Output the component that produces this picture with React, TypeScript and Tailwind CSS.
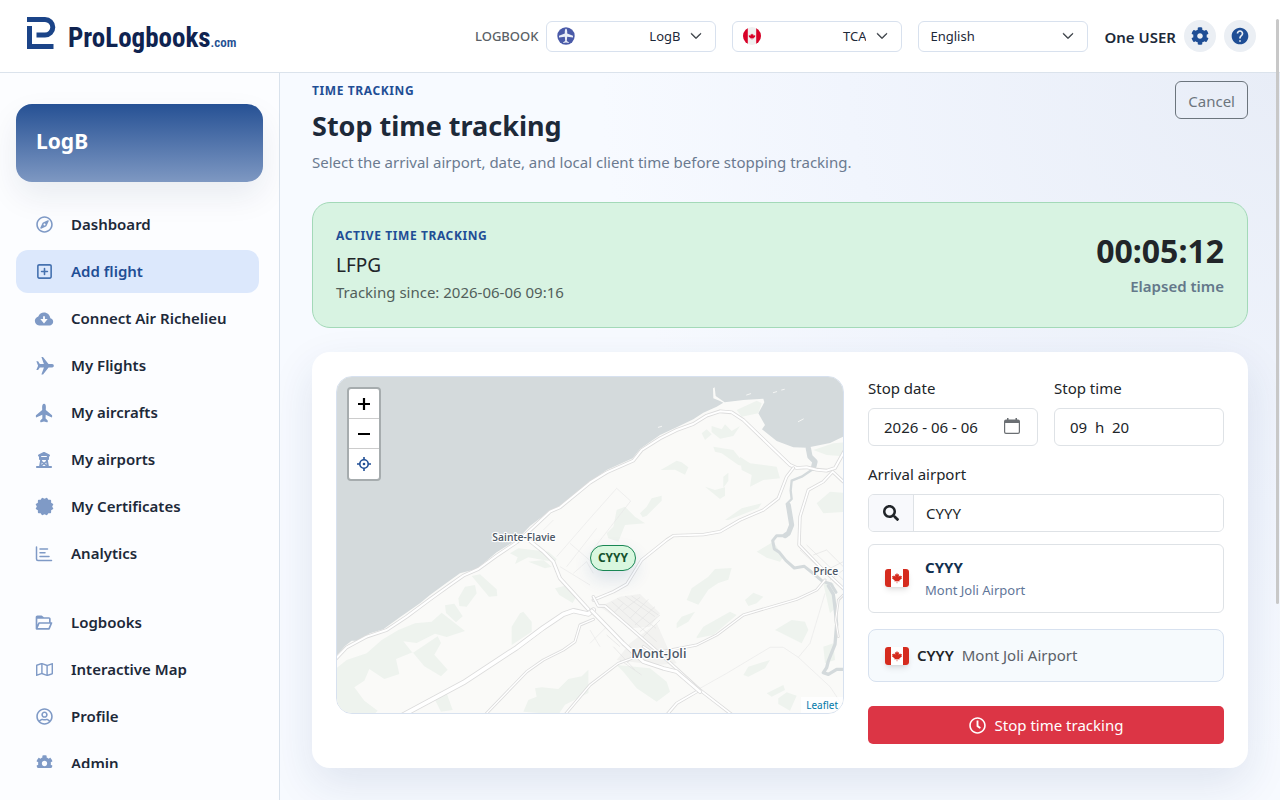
import React from 'react';
import { BiSolidCertification, BiSolidCloudDownload, BiFolderOpen, BiSolidPlaneAlt } from 'react-icons/bi';
import {
  FaCog,
  FaRegClock,
  FaRegCompass,
  FaRegMap,
  FaRegUserCircle,
  FaSearch,
} from 'react-icons/fa';
import { FaRegSquarePlus, FaTowerObservation } from 'react-icons/fa6';
import { IoAirplane } from 'react-icons/io5';
import { MdHelp } from 'react-icons/md';
import { BsChevronDown } from 'react-icons/bs';

function AnalyticsIcon({ className }: { className?: string }) {
  return (
    <svg viewBox="0 0 18 18" className={className} fill="none" stroke="currentColor" strokeWidth="1.5" strokeLinecap="round">
      <path d="M1.5 2v12q0 1.5 1.5 1.5h13.5M5 4h7.5M5 7.7h5M5 11.5h9" />
    </svg>
  );
}

const MAPLE =
  'M0-10 2-6 5-7.5 4-2 7.5-5 8.3-3 12-3.5 10.5 0 12 1.2 5.5 6 6 8 .7 7.3.7 12H-.7L-.7 7.3-6 8-5.5 6-12 1.2-10.5 0-12-3.5-8.3-3-7.5-5-4-2-5-7.5-2-6Z';

function CanadaFlag() {
  return (
    <svg viewBox="0 0 24 18" className="h-[18px] w-6 shrink-0 rounded-[3px] shadow-md" aria-label="Canada">
      <path fill="#fff" d="M0 0h24v18H0z" />
      <path fill="#d52b1e" d="M0 0h6v18H0zM18 0h6v18h-6z" />
      <path fill="#d52b1e" d={MAPLE} transform="translate(12 8.600) scale(.42 .48)" />
    </svg>
  );
}

function RoundFlag() {
  return (
    <svg viewBox="0 0 18 18" className="h-[18px] w-[18px]" aria-hidden="true">
      <clipPath id="round-flag">
        <circle cx="9" cy="9" r="9" />
      </clipPath>
      <g clipPath="url(#round-flag)">
        <path fill="#f0f0f0" d="M0 0h18v18H0z" />
        <path fill="#d80027" d="M0 0h4.8v18H0zM13.2 0H18v18h-4.8z" />
        <path fill="#d80027" d={MAPLE} transform="translate(9 9.3) scale(.28)" />
      </g>
    </svg>
  );
}

function PlaneBadge() {
  return (
    <svg viewBox="0 0 18 18" className="h-[18px] w-[18px]" aria-hidden="true">
      <circle cx="9" cy="9" r="8.7" fill="#4a5aa8" />
      <path
        fill="#e9edf7"
        d="M9 1.5q1.2.8 1.2 2.8v2.2l5.8 2.3v1.8l-5.8-.9-.4 4.3 2 1.2v.9L9 15.6l-2.8.5v-.9l2-1.2-.4-4.3-5.8.9V8.800l5.800-2.300V4.300Q7.800 2.300 9 1.500Z"
      />
    </svg>
  );
}

function Logo() {
  return (
    <a href="#home" className="flex items-center gap-3" aria-label="ProLogbooks.com">
      <svg viewBox="0 0 30 34" className="mb-1.5 h-[34px] w-[30px]" fill="none" stroke="#1b4488" strokeWidth="5">
        <path d="M1 3.500H19a7.200 7.200 0 0 1 0 15.600H10.500" />
        <path d="M3.500 10V30.500H27.500" />
      </svg>
      <span className="flex items-baseline pt-1 font-['Roboto_Condensed','Liberation_Sans',sans-serif] leading-none">
        <span className="text-[32px] font-bold text-[#0f2350] md:text-[27px]">ProLogbooks</span>
        <span className="text-[13px] font-semibold text-[#244f92]">.com</span>
      </span>
    </a>
  );
}

function HeaderSelect({ label, value, badge }: { label: string; value: string; badge?: React.ReactNode }) {
  return (
    <div className="relative w-[170px]">
      {badge && <span className="pointer-events-none absolute top-1.5 left-[11px]">{badge}</span>}
      <select
        aria-label={label}
        className={
          badge
            ? 'h-[31px] w-full appearance-none rounded-md border border-[#d8e1ee] bg-white pt-0.5 pr-[35px] pl-10 text-[13px] text-[#1d2939] [text-align-last:right]'
            : 'h-[31px] w-full appearance-none rounded-md border border-[#d8e1ee] bg-white pt-0.5 pr-8 pl-[11px] text-[13px] text-[#1d2939]'
        }
      >
        <option>{value}</option>
      </select>
      <BsChevronDown className="pointer-events-none absolute top-[9px] right-[14px] h-3 w-3 text-[#343a40] [stroke-width:1]" />
    </div>
  );
}

function Header() {
  return (
    <header className="flex h-[73px] shrink-0 items-center justify-between border-b border-[#dbe3ec] bg-white pr-6 pl-[26px]">
      <Logo />
      <div className="flex items-center gap-4">
        <div className="flex items-center gap-2">
          <span className="pt-0.5 text-[13px] font-medium text-[#5a5f66]">LOGBOOK</span>
          <HeaderSelect label="Logbook" value="LogB" badge={<PlaneBadge />} />
        </div>
        <HeaderSelect label="Authority" value="TCA" badge={<RoundFlag />} />
        <HeaderSelect label="Language" value="English" />
        <div className="flex items-center gap-2">
          <span className="pt-0.5 text-[15px] font-semibold text-[#1d2939]">One USER</span>
          <button aria-label="Settings" className="grid h-8 w-8 place-items-center rounded-full bg-[#ebeff4] text-[#1f4e95]">
            <FaCog className="h-[18px] w-[18px]" />
          </button>
          <button aria-label="Help" className="grid h-8 w-8 place-items-center rounded-full bg-[#ebeff4] text-[#1f4e95]">
            <MdHelp className="h-5 w-5" />
          </button>
        </div>
      </div>
    </header>
  );
}

const NAV = [
  { text: 'Dashboard', icon: <FaRegCompass className="h-[17px] w-[17px]" /> },
  { text: 'Add flight', icon: <FaRegSquarePlus className="h-[17px] w-[17px]" /> },
  { text: 'Connect Air Richelieu', icon: <BiSolidCloudDownload className="h-[22px] w-[22px]" /> },
  { text: 'My Flights', icon: <BiSolidPlaneAlt className="h-[21px] w-[21px] rotate-45 stroke-current" /> },
  { text: 'My aircrafts', icon: <IoAirplane className="h-5 w-5 -rotate-90" /> },
  { text: 'My airports', icon: <FaTowerObservation className="h-4 w-4" /> },
  { text: 'My Certificates', icon: <BiSolidCertification className="h-[21px] w-[21px]" /> },
  { text: 'Analytics', icon: <AnalyticsIcon className="h-[18px] w-[18px]" /> },
];
const NAV_SECOND = [
  { text: 'Logbooks', icon: <BiFolderOpen className="h-5 w-5" /> },
  { text: 'Interactive Map', icon: <FaRegMap className="h-[17px] w-[17px]" /> },
  { text: 'Profile', icon: <FaRegUserCircle className="h-[17px] w-[17px]" /> },
  { text: 'Admin', icon: <FaCog className="h-[17px] w-[17px]" /> },
];

function NavGroup({ items, active }: { items: typeof NAV; active?: string }) {
  return (
    <ul className="flex flex-col gap-1">
      {items.map((item) => (
        <li key={item.text}>
          <a
            href="#nav"
            className={
              item.text === active
                ? 'flex h-[43px] items-center gap-[15px] rounded-xl bg-[#dce8fc] px-4 text-[15px] font-semibold text-[#1f4e95]'
                : 'flex h-[43px] items-center gap-[15px] rounded-xl px-4 text-[15px] font-semibold text-[#1d2939]'
            }
          >
            <span className={item.text === active ? 'grid w-6 place-items-center text-[#4672b0]' : 'grid w-6 place-items-center text-[#7f9ac6]'}>
              {item.icon}
            </span>
            {item.text}
          </a>
        </li>
      ))}
    </ul>
  );
}

function Sidebar() {
  return (
    <aside className="flex w-[280px] shrink-0 flex-col border-r border-[#d9e2ec] bg-[#fcfdff] pt-[31px] pr-4 pb-8 pl-4">
      <div className="flex h-[78px] shrink-0 items-center rounded-2xl bg-linear-to-b from-[#265194] to-[#7e98c2] px-5 pb-[3px] shadow-[0_14px_32px_rgba(15,35,80,0.08)]">
        <h2 className="text-[21px] font-bold text-white">LogB</h2>
      </div>
      <nav className="mt-[21px] flex min-h-0 flex-col gap-[26px] overflow-hidden pr-1">
        <NavGroup items={NAV} active="Add flight" />
        <NavGroup items={NAV_SECOND} />
      </nav>
    </aside>
  );
}

function Road({ d, w }: { d: string; w: number }) {
  return (
    <g fill="none" strokeLinejoin="round" strokeLinecap="round">
      <path d={d} stroke="#dcdcdc" strokeWidth={w} />
      <path d={d} stroke="#fff" strokeWidth={w - 5} />
    </g>
  );
}

const COAST_ROAD =
  'M0 885 50 832 110 800 170 780 230 740 300 688 360 645 400 617 445 597 500 557 560 517 610 472 660 425 690 412 780 338 830 307 910 272 935 240 990 205 1040 180 1090 162 1130 137 1170 124 1205 127 1240 150 1380 285 1400 294 1430 292 1460 299 1490 302 1515 294 1545 240';
const HIGHWAY = 'M210 1040 400 938 560 833 640 773 700 733 730 722 775 732 790 720';

function MapDrawing() {
  return (
    <svg viewBox="21 21 1518 1008" preserveAspectRatio="xMidYMid slice" className="absolute inset-0 h-full w-full bg-[#d4dadc]" role="img" aria-label="Map of Mont-Joli">
      <path
        fill="#fafaf8"
        d="M0 880 45 828 65 812 85 812 120 790 160 778 215 738 270 700 300 675 345 642 390 610 440 597 500 547 560 510 600 468 655 426 690 407 780 335 830 300 908 265 930 237 990 195 1040 172 1090 148 1120 128 1160 110 1180 98 1170 93 1150 85 1149 55 1154 52 1157 78 1184 97 1240 90 1300 86 1303 97 1285 130 1305 165 1296 178 1340 213 1390 232 1430 233 1500 219 1560 190V1040H0Z"
      />
      <g fill="#eef3ee">
        <path d="m0 910 50-40 60-20 45-40 50-30 50-20 50-5 30-27 70 55-55 18-35-10-55 28-40-5 28 35 75-50 10 20-20 35 40 45-20 20-50-30-35-42-50 20 10 45-45 15-45-30-15 35-30 20 30 40 40 30-30 30H0z" />
        <path d="m345 706 28-5 25 38-20 18-30-28zM385 685l20-35 30-5 5 25-30 40-22-2zM425 618l25-5 50 45 2 20-25 2zM540 550l25-15 90 10 25 22-5 10-80-15-40 20 8-20zM595 575l45-5 25 20-20 5zM675 655l30-8 35 30-12 22-40-24zM545 770l25-40 10-5 25 30v30l-60 40zM310 980l40-10 18 50-35 5zM580 1025l15-35 25-10-5-25 20-3 50 5 30-30 40-8 20-20v70l-70 35-20 30z" />
        <path d="m992 300 48-28 15 5 20 15-10 22-30-15zM1145 168l30 10 10-15 20 20 25-15-20 30-40 8-25-20zM1115 190l15-12 15 15-20 17zM1150 230l60 10 20 25 20 25-25-5-50-35-20-5zM1230 260l30 20 80 10 10 35-50 5-40 20 5-35-30-15zM1125 350l30 10 30-8v25l-15 10zM1180 320l15-12v25l-15 20zM1185 450l50-35 60-15-10 15-90 35zM930 430l20-20 15-25 30-8v15l-45 45-12 5zM830 490l20-20 10-50 25-10 30 30 30 20-60 5-20 50-30-10zM1070 690l15-35 50-35 20-23 50-3-10 35-30 10-30 20-30 45zM1040 760l15-20 40-15-20 30-35 20zM1100 800l20-30 80-45 20 10-70 60-50 10zM1245 690l25-22 30 12-20 20-25 8zM1335 780l50-30 40 5 10 25-20 40-60-30zM1240 915l15-25 65-20-15 25-50 25zM1310 970l50-25 5 15-40 20zM1345 985l25-18 30 10-20 45-35-20zM1460 400l40-35 60 5v55l-80 5zM1450 240l60-20 60-5-20 45-60-5zM1280 545l50-30 30 45-10 15-40-12zM1220 120l60-28 15 8-10 30-50 10zM1480 830l30-10 5 50-30 10zM860 885l100 10 50 40 10 30-40 30-60-40-40-50zM1480 640l30 0 10 70-20 20z" />
      </g>
      <g stroke="#e9e9e9" strokeWidth="2" fill="none">
        <path d="M680 560 780 445 860 355 902 393 780 550M710 590 800 475M720 520 790 580M690 590 780 645M730 610 770 575 790 610M620 465 650 440M640 480 670 450M1110 955 1190 910 1320 832H1360L1405 862 1500 950 1540 1010M1405 862 1440 820 1485 670M780 820 830 770M780 780 810 830" />
      </g>
      <path d="M860 870 900 820 980 760 1020 850 1040 880 980 885ZM810 710 870 680 930 672 990 730 960 770 900 775Z" fill="#eeeeec" opacity=".7" />
      <g stroke="#e2e2e2" strokeWidth="2" fill="none">
        <path d="M828 705 1010 870M845 695 980 815M862 685 978 775M885 678 975 740M905 678 985 735M880 720 930 682M900 745 955 688M915 765 975 710M930 785 990 735M850 730 880 700M940 800 990 750M850 830 915 900M870 870 935 915M870 830 830 795M890 880 930 840M1410 540 1540 660M1430 525 1540 630M1450 555 1490 540 1540 590M1490 600 1540 575M1500 630 1540 600" />
      </g>
      <g fill="none" stroke="#d4dadc" strokeLinejoin="round" strokeLinecap="round">
        <path strokeWidth="16" d="m1435 235 5 25 15 15-5 20" />
        <path strokeWidth="7" d="m1445 300-30 20-30 12-3 30 3 25-15 15" />
        <path strokeWidth="15" d="m1375 405 5 30 5 30-10 25-10 7" />
        <path strokeWidth="9" d="m1370 497-30 0-12 15 5 25 15 10 20 25 25 22 30-5 25 20 30 25 25 8 15 25" />
        <path strokeWidth="10" d="m1495 648 15 25 5 40 5 50-5 60-10 25-10 25-5 20-10 15 15 5 25-15 25 0" />
        <path strokeWidth="3" d="m940 238 5-5M985 172l10-3M1250 75l12-4M1330 68l10-3M1405 155l15-8M1355 60l8-2" stroke="#f4f5f4" />
      </g>
      <Road w={11} d={COAST_ROAD} />
      <Road w={9} d="M460 1040 590 905 640 870 700 840 735 815 750 765 790 748M700 1040 780 945 865 880 905 865" />
      <Road w={12} d="M600 513 640 545 670 575 690 625 775 718" />
      <Road w={10} d="M790 690 850 665 890 643 935 570 1010 510 1030 497 1120 494 1170 485 1230 450 1300 420 1345 385 1370 320 1390 294" />
      <Road w={10} d="M1540 335 1508 305 1480 335 1435 360 1410 440 1407 525 1470 590 1550 665" />
      <Road w={9} d="M940 830 970 850 1100 825 1160 795 1240 735 1400 688 1460 660 1485 630" />
      <Road w={10} d="M790 680 805 708 825 708 1000 860 1110 960 1220 1045M1100 965 1040 1000 1010 1035" />
      <Road w={16} d={HIGHWAY} />
      <Road w={13} d="M785 722 880 820 940 875 1000 895 1040 905 1110 965" />
      <Road w={8} d="M1525 800 1517 750 1525 690 1550 665" />
      <g fontFamily="'Open Sans', 'Noto Sans', sans-serif" fontWeight="600" fill="#4d5866" stroke="#fff" strokeWidth="7" strokeLinejoin="round" paintOrder="stroke">
        <text x="487" y="514" fontSize="31">Sainte-Flavie</text>
        <text x="904" y="864" fontSize="38">Mont-Joli</text>
        <text x="1450" y="616" fontSize="31">Price</text>
      </g>
    </svg>
  );
}

function AirportMap() {
  return (
    <div className="relative h-[338px] overflow-hidden rounded-2xl border border-[#d7e1ef] lg:col-span-7">
      <MapDrawing />
      <div className="absolute top-2.5 left-2.5 flex w-[34px] flex-col divide-y divide-[#ccc] overflow-hidden rounded border-2 border-[#a6acae] bg-white">
        <button aria-label="Zoom in" className="grid h-[30px] place-items-center text-black">
          <svg viewBox="0 0 14 14" className="h-3.5 w-3.5" stroke="currentColor" strokeWidth="2.2">
            <path d="M1 7h12M7 1v12" />
          </svg>
        </button>
        <button aria-label="Zoom out" className="grid h-[30px] place-items-center text-black">
          <svg viewBox="0 0 14 14" className="h-3.5 w-3.5" stroke="currentColor" strokeWidth="2.2">
            <path d="M1 7h12" />
          </svg>
        </button>
        <button aria-label="Locate airport" className="grid h-[30px] place-items-center text-[#1f4e95]">
          <svg viewBox="0 0 14 14" className="h-3.5 w-3.5" stroke="currentColor" strokeWidth="1.6" fill="none">
            <circle cx="7" cy="7" r="4.200" />
            <circle cx="7" cy="7" r="1.300" fill="currentColor" stroke="none" />
            <path d="M7 0v2.800M7 11.200V14M0 7h2.800M11.200 7H14" />
          </svg>
        </button>
      </div>
      <span className="absolute top-[50%] left-[50%] grid h-[26px] w-[46px] place-items-center rounded-full border border-[#198754] bg-[#d9f7df] text-[12px] font-bold text-[#14532d] shadow-[0_8px_18px_rgba(31,78,149,0.14)]">
        CYYY
      </span>
      <a href="#leaflet" className="absolute right-0 bottom-0 bg-white/80 px-[5px] text-[10px] leading-4 text-[#0078a8]">
        Leaflet
      </a>
    </div>
  );
}

const FIELD = 'h-[38px] w-full rounded-md border border-[#dee2e6] bg-white px-[15px] text-[15px] text-[#212529]';
const LABEL = 'mb-2 block text-[15px] leading-6 text-[#212529]';

function StopForm() {
  return (
    <form className="flex flex-col lg:col-span-5">
      <div className="grid grid-cols-2 gap-4">
        <div>
          <label htmlFor="stop-date" className={LABEL}>Stop date</label>
          <div className="relative">
            <input id="stop-date" className={FIELD} defaultValue="2026 - 06 - 06" />
            <button type="button" aria-label="Pick a date" className="absolute top-[10px] right-[18px] text-[#6b6f73]">
              <svg viewBox="0 0 16 16" className="h-4 w-4" fill="currentColor">
                <path d="M3 0h1.500v1.500h7V0H13v1.500h1a2 2 0 0 1 2 2V14a2 2 0 0 1-2 2H2a2 2 0 0 1-2-2V3.500a2 2 0 0 1 2-2h1ZM1.200 5v9q0 .8.800.8h12q.8 0 .8-.8V5Z" fillRule="evenodd" />
              </svg>
            </button>
          </div>
        </div>
        <div>
          <label htmlFor="stop-time" className={LABEL}>Stop time</label>
          <input id="stop-time" className={FIELD} defaultValue="09  h  20" />
        </div>
      </div>
      <label htmlFor="arrival" className="mt-4 mb-2 block text-[15px] leading-6 text-[#212529]">Arrival airport</label>
      <div className="flex h-[38px] overflow-hidden rounded-md border border-[#dee2e6]">
        <span className="grid w-[45px] shrink-0 place-items-center border-r border-[#dee2e6] bg-[#f8f9fc] text-[#212529]">
          <FaSearch className="h-4 w-4" />
        </span>
        <input id="arrival" className="min-w-0 flex-1 bg-white px-3 text-[15px] text-[#212529]" defaultValue="CYYY" />
      </div>
      <button type="button" className="mt-3 flex h-[69px] items-center gap-4 rounded-md border border-[#dee2e6] bg-white px-4 pb-0.5 text-left">
        <CanadaFlag />
        <span className="flex flex-col">
          <strong className="text-[15px] leading-6 font-bold text-[#12304f]">CYYY</strong>
          <span className="text-[13px] leading-[22px] text-[#5f7699]">Mont Joli Airport</span>
        </span>
      </button>
      <div className="mt-4 flex h-[53px] items-center gap-2 rounded-lg border border-[#d7e1ef] bg-[#f6fafd] px-4 text-[15px]">
        <CanadaFlag />
        <strong className="font-semibold text-[#212529]">CYYY</strong>
        <span className="text-[#5b6168]">Mont Joli Airport</span>
      </div>
      <button type="submit" className="mt-6 flex h-[38px] items-center justify-center gap-[9px] rounded-[5px] bg-[#dc3545] text-[15px] text-white">
        <FaRegClock className="h-[17px] w-[17px]" />
        Stop time tracking
      </button>
    </form>
  );
}

export default function App() {
  return (
    <div className="flex h-screen flex-col overflow-hidden font-['Noto_Sans',sans-serif] text-[#212529]">
      <Header />
      <div className="flex min-h-0 flex-1">
        <Sidebar />
        <main className="min-w-0 flex-1 overflow-hidden bg-[#f7faff] bg-[radial-gradient(circle_at_top_right,#e8edf7_0%,#f1f5fd_35%,transparent_55%)] px-8 pt-2">
          <div className="flex items-start justify-between">
            <div className="pt-px">
              <p className="text-[12px] leading-[18px] font-bold tracking-wider text-[#1f4e95]">TIME TRACKING</p>
              <h1 className="mt-2 text-[27px] leading-9 font-bold text-[#1d2939]">Stop time tracking</h1>
              <p className="mt-1.5 text-[15px] leading-6 text-[#6b7a90]">
                Select the arrival airport, date, and local client time before stopping tracking.
              </p>
            </div>
            <button className="h-[38px] rounded-md border border-[#6c757d] px-3 pt-0.5 text-[15px] text-[#6c757d]">Cancel</button>
          </div>

          <section className="mt-7 flex items-center justify-between rounded-[18px] border border-[#a3d9b8] bg-[#d8f3e2] p-[23px]">
            <div>
              <p className="text-[12px] leading-5 font-bold tracking-wider text-[#1f4e95]">ACTIVE TIME TRACKING</p>
              <p className="mt-1 text-[19px] leading-[30px]">LFPG</p>
              <p className="text-[15px] leading-6 text-[#525f5b]">Tracking since: 2026-06-06 09:16</p>
            </div>
            <div className="text-right">
              <p className="text-[32px] leading-[38px] font-bold">00:05:12</p>
              <p className="mt-1 text-[15px] leading-6 font-semibold text-[#64788a]">Elapsed time</p>
            </div>
          </section>

          <section className="mt-6 grid gap-6 rounded-[18px] bg-white p-6 shadow-[0_16px_44px_rgba(31,58,110,0.11)] lg:grid-cols-12">
            <AirportMap />
            <StopForm />
          </section>
        </main>
      </div>
      <div className="absolute top-[19px] right-px h-[585px] w-[3px] rounded-full bg-[#c8c8c8]" />
    </div>
  );
}
